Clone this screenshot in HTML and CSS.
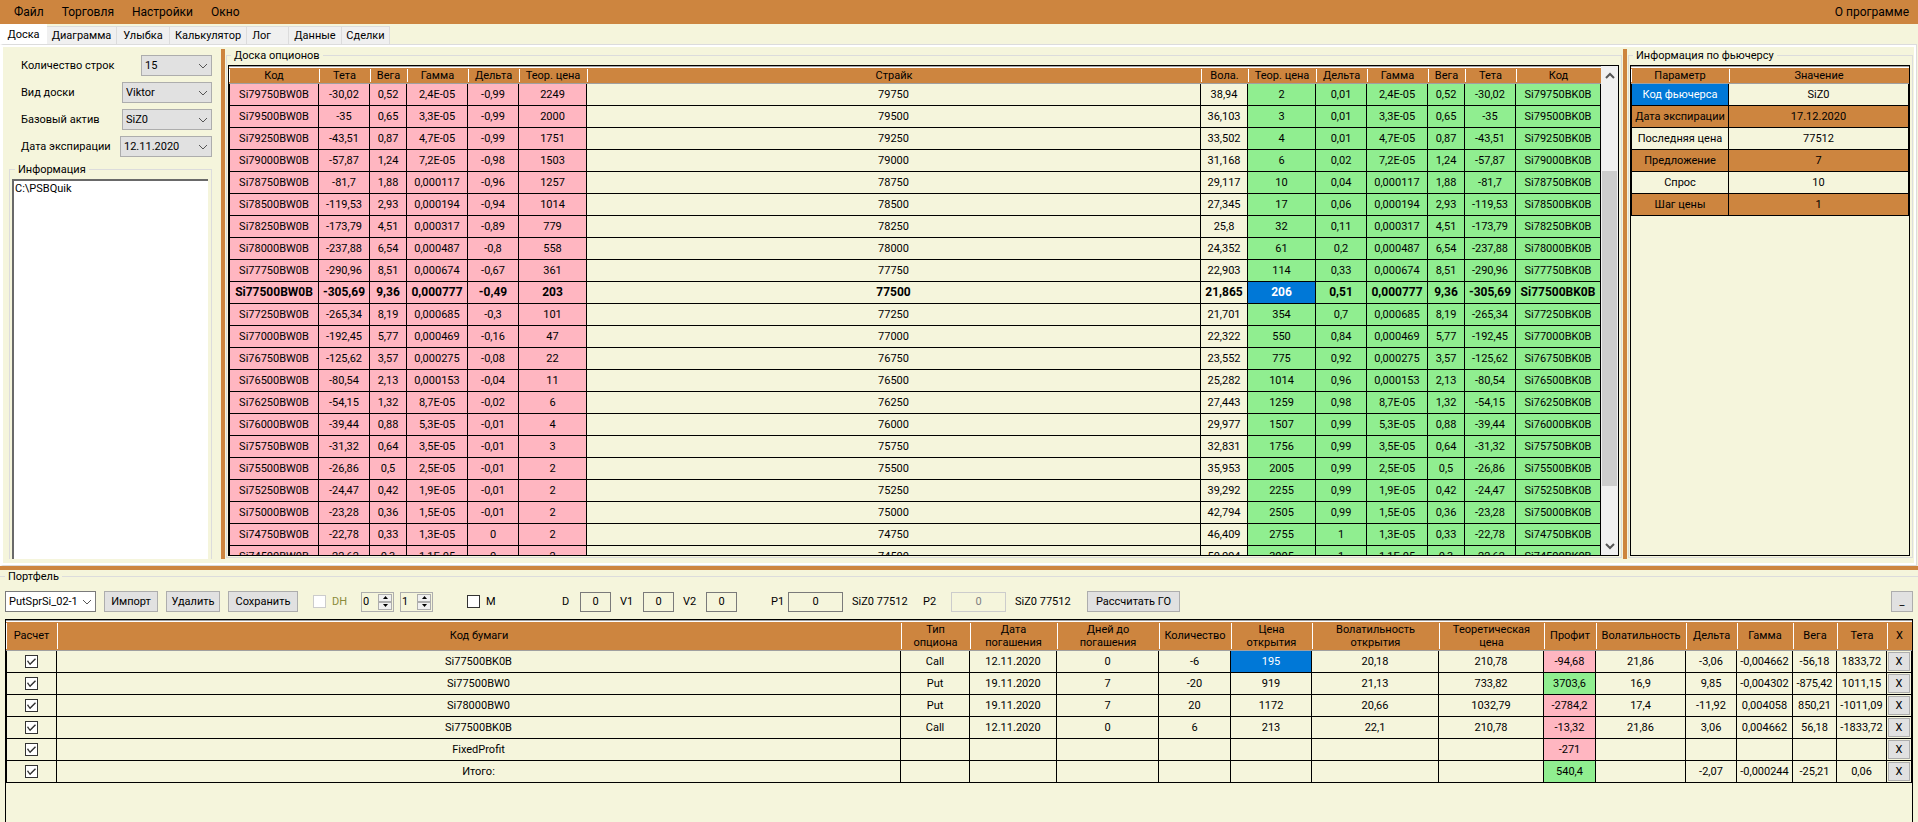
FILE: index.html
```html
<!DOCTYPE html>
<html lang="ru">
<head>
<meta charset="utf-8">
<title>Доска опционов</title>
<link rel="stylesheet" href="styles.css">
</head>
<body>
<nav class="menu">
  <button type="button">Файл</button>
  <button type="button">Торговля</button>
  <button type="button">Настройки</button>
  <button type="button">Окно</button>
  <button type="button" class="menu-about">О программе</button>
</nav>

<div class="tabs" role="tablist">
  <button type="button" role="tab" class="tab tab-active" aria-selected="true">Доска</button>
  <button type="button" role="tab" class="tab tab-l">Диаграмма</button>
  <button type="button" role="tab" class="tab tab-m">Улыбка</button>
  <button type="button" role="tab" class="tab tab-xl">Калькулятор</button>
  <button type="button" role="tab" class="tab tab-s">Лог</button>
  <button type="button" role="tab" class="tab tab-m">Данные</button>
  <button type="button" role="tab" class="tab tab-end">Сделки</button>
</div>

<main class="page">
  <aside class="side">
    <div class="field">
      <label for="rows">Количество строк</label>
      <span class="combo combo-s"><select id="rows"><option>15</option></select><svg viewBox="0 0 10 6"><path d="M1 1l4 4 4-4"/></svg></span>
    </div>
    <div class="field">
      <label for="view">Вид доски</label>
      <span class="combo combo-m"><select id="view"><option>Viktor</option></select><svg viewBox="0 0 10 6"><path d="M1 1l4 4 4-4"/></svg></span>
    </div>
    <div class="field">
      <label for="asset">Базовый актив</label>
      <span class="combo combo-m"><select id="asset"><option>SiZ0</option></select><svg viewBox="0 0 10 6"><path d="M1 1l4 4 4-4"/></svg></span>
    </div>
    <div class="field">
      <label for="expiry">Дата экспирации</label>
      <span class="combo combo-l"><select id="expiry"><option>12.11.2020</option></select><svg viewBox="0 0 10 6"><path d="M1 1l4 4 4-4"/></svg></span>
    </div>
    <fieldset class="group info">
      <legend>Информация</legend>
      <textarea class="log" aria-label="Информация">C:\PSBQuik</textarea>
    </fieldset>
  </aside>

  <div class="splitter"></div>

  <fieldset class="group">
    <legend>Доска опционов</legend>
    <div class="grid board">
      <div class="viewport">
        <table class="sheet">
          <colgroup>
            <col class="w-code"><col class="w-teta"><col class="w-vega"><col class="w-gamma"><col class="w-teta"><col class="w-price">
            <col>
            <col class="w-vola"><col class="w-price"><col class="w-teta"><col class="w-gamma"><col class="w-vega"><col class="w-teta"><col class="w-code2">
          </colgroup>
          <thead>
            <tr><th>Код</th><th>Тета</th><th>Вега</th><th>Гамма</th><th>Дельта</th><th>Теор. цена</th><th>Страйк</th><th>Вола.</th><th>Теор. цена</th><th>Дельта</th><th>Гамма</th><th>Вега</th><th>Тета</th><th>Код</th></tr>
          </thead>
          <tbody id="board-rows"></tbody>
        </table>
      </div>
      <div class="scrollbar">
        <button type="button" aria-label="Вверх"><svg viewBox="0 0 10 7"><path d="M1 6l4-4 4 4"/></svg></button>
        <div class="track"><div class="thumb"></div></div>
        <button type="button" aria-label="Вниз"><svg viewBox="0 0 10 7"><path d="M1 1l4 4 4-4"/></svg></button>
      </div>
    </div>
  </fieldset>

  <div class="splitter"></div>

  <fieldset class="group">
    <legend>Информация по фьючерсу</legend>
    <div class="grid future">
      <table class="sheet">
        <colgroup><col class="w-param"><col></colgroup>
        <thead><tr><th>Параметр</th><th>Значение</th></tr></thead>
        <tbody>
          <tr><td class="selected">Код фьючерса</td><td>SiZ0</td></tr>
          <tr class="alt"><td>Дата экспирации</td><td>17.12.2020</td></tr>
          <tr><td>Последняя цена</td><td>77512</td></tr>
          <tr class="alt"><td>Предложение</td><td>7</td></tr>
          <tr><td>Спрос</td><td>10</td></tr>
          <tr class="alt"><td>Шаг цены</td><td>1</td></tr>
        </tbody>
      </table>
    </div>
  </fieldset>
</main>

<div class="splitter-row"></div>

<fieldset class="portfolio">
  <legend>Портфель</legend>
  <div class="toolbar">
    <div class="files">
      <span class="combo combo-white"><select aria-label="Портфель"><option>PutSprSi_02-1</option></select><svg viewBox="0 0 10 6"><path d="M1 1l4 4 4-4"/></svg></span>
      <button type="button" class="btn btn-s">Импорт</button>
      <button type="button" class="btn btn-s">Удалить</button>
      <button type="button" class="btn btn-m">Сохранить</button>
    </div>
    <div class="hedge">
      <label class="check dim"><input type="checkbox" disabled>DH</label>
      <span class="spin"><input type="text" value="0" aria-label="DH 1"><span class="arrows"><button type="button" aria-label="Больше"><svg viewBox="0 0 5 3"><path d="M0 3h5L2.500 0z"/></svg></button><button type="button" aria-label="Меньше"><svg viewBox="0 0 5 3"><path d="M0 0h5L2.500 3z"/></svg></button></span></span>
      <span class="spin"><input type="text" value="1" aria-label="DH 2"><span class="arrows"><button type="button" aria-label="Больше"><svg viewBox="0 0 5 3"><path d="M0 3h5L2.500 0z"/></svg></button><button type="button" aria-label="Меньше"><svg viewBox="0 0 5 3"><path d="M0 0h5L2.500 3z"/></svg></button></span></span>
    </div>
    <label class="check model"><input type="checkbox">M</label>
    <div class="shifts">
      <label class="named named-s">D<input type="text" value="0"></label>
      <label class="named">V1<input type="text" value="0"></label>
      <label class="named">V2<input type="text" value="0"></label>
    </div>
    <div class="prices">
      <label class="named price">P1<input type="text" value="0"></label>
      <span class="quote">SiZ0 77512</span>
      <label class="named price price2">P2<input type="text" value="0" disabled></label>
      <span class="quote">SiZ0 77512</span>
    </div>
    <button type="button" class="btn btn-l">Рассчитать ГО</button>
    <button type="button" class="btn btn-min">_</button>
  </div>
  <div class="grid positions">
    <table class="sheet">
      <colgroup>
        <col class="p-calc"><col><col class="p-type"><col class="p-date"><col class="p-days"><col class="p-qty"><col class="p-open"><col class="p-volopen"><col class="p-theor"><col class="p-profit"><col class="p-vol"><col class="p-delta"><col class="p-gamma"><col class="p-vega"><col class="p-teta"><col class="p-x">
      </colgroup>
      <thead>
        <tr><th>Расчет</th><th>Код бумаги</th><th>Тип<br>опциона</th><th>Дата<br>погашения</th><th>Дней до<br>погашения</th><th>Количество</th><th>Цена<br>открытия</th><th>Волатильность<br>открытия</th><th>Теоретическая<br>цена</th><th>Профит</th><th>Волатильность</th><th>Дельта</th><th>Гамма</th><th>Вега</th><th>Тета</th><th>X</th></tr>
      </thead>
      <tbody>
        <tr><td><input type="checkbox" checked aria-label="Расчет"></td><td>Si77500BK0B</td><td>Call</td><td>12.11.2020</td><td>0</td><td>-6</td><td class="selected">195</td><td>20,18</td><td>210,78</td><td class="put">-94,68</td><td>21,86</td><td>-3,06</td><td>-0,004662</td><td>-56,18</td><td>1833,72</td><td><button type="button" class="del">X</button></td></tr>
        <tr><td><input type="checkbox" checked aria-label="Расчет"></td><td>Si77500BW0</td><td>Put</td><td>19.11.2020</td><td>7</td><td>-20</td><td>919</td><td>21,13</td><td>733,82</td><td class="call">3703,6</td><td>16,9</td><td>9,85</td><td>-0,004302</td><td>-875,42</td><td>1011,15</td><td><button type="button" class="del">X</button></td></tr>
        <tr><td><input type="checkbox" checked aria-label="Расчет"></td><td>Si78000BW0</td><td>Put</td><td>19.11.2020</td><td>7</td><td>20</td><td>1172</td><td>20,66</td><td>1032,79</td><td class="put">-2784,2</td><td>17,4</td><td>-11,92</td><td>0,004058</td><td>850,21</td><td>-1011,09</td><td><button type="button" class="del">X</button></td></tr>
        <tr><td><input type="checkbox" checked aria-label="Расчет"></td><td>Si77500BK0B</td><td>Call</td><td>12.11.2020</td><td>0</td><td>6</td><td>213</td><td>22,1</td><td>210,78</td><td class="put">-13,32</td><td>21,86</td><td>3,06</td><td>0,004662</td><td>56,18</td><td>-1833,72</td><td><button type="button" class="del">X</button></td></tr>
        <tr><td><input type="checkbox" checked aria-label="Расчет"></td><td>FixedProfit</td><td></td><td></td><td></td><td></td><td></td><td></td><td></td><td class="put">-271</td><td></td><td></td><td></td><td></td><td></td><td><button type="button" class="del">X</button></td></tr>
        <tr><td><input type="checkbox" checked aria-label="Расчет"></td><td>Итого:</td><td></td><td></td><td></td><td></td><td></td><td></td><td></td><td class="call">540,4</td><td></td><td>-2,07</td><td>-0,000244</td><td>-25,21</td><td>0,06</td><td><button type="button" class="del">X</button></td></tr>
      </tbody>
    </table>
  </div>
</fieldset>
<script src="board.js"></script>
</body>
</html>
```

FILE: styles.css
```css
* { box-sizing: border-box; }

html, body { height: 100%; }

body {
  margin: 0;
  display: flex;
  flex-direction: column;
  overflow: hidden;
  background: #f5f5dc;
  color: #000;
  font: 11px/13px Roboto, "Liberation Sans", sans-serif;
}

button, input, select, textarea {
  margin: 0;
  padding: 0;
  border: 0;
  border-radius: 0;
  background: none;
  color: inherit;
  font: inherit;
}

svg { display: block; fill: none; stroke: #555; }

/* menu */
.menu {
  flex: none;
  display: flex;
  align-items: center;
  gap: 18px;
  height: 24px;
  padding: 0 9px 0 14px;
  background: #cd853f;
  font-size: 12px;
}
.menu-about { margin-left: auto; }

/* tabs */
.tabs {
  flex: none;
  display: flex;
  align-items: flex-end;
  height: 20px;
}
.tab {
  height: 18px;
  border: 1px solid #dcdcdc;
  border-width: 1px 1px 0 0;
  background: #f0f0f0;
  text-align: center;
}
.tab-active {
  width: 47px;
  height: 20px;
  border: 0;
  background: #fff;
}
.tab-s { width: 42px; padding-right: 12px; }
.tab-m { width: 53px; }
.tab-l { width: 70px; }
.tab-xl { width: 77px; }
.tab-end { width: 48px; }

/* tab page */
.page {
  flex: 1;
  min-height: 0;
  margin-right: 1px;
  display: grid;
  grid-template-columns: 218px 4px 1fr 4px 287px;
  grid-template-rows: minmax(0, 1fr);
  padding: 4px 2px 6px 0;
  border: 1px solid #dcdcdc;
  border-left: 3px solid #fff;
  outline: 2px solid #fff;
  outline-offset: -3px;
}
.splitter, .splitter-row { background: #cd853f; }
.splitter-row { flex: 0 0 4px; }

.group {
  min-width: 0;
  min-height: 0;
  display: flex;
  flex-direction: column;
  margin: 0 1px 1px;
  padding: 3px 2px 1px 1px;
  border: 1px solid #dcdcdc;
}
.group legend, .portfolio legend { padding: 0 3px; }
.group legend { margin-left: 3px; }

/* left panel */
.side {
  display: flex;
  flex-direction: column;
  gap: 6px;
  min-height: 0;
  overflow: hidden;
  padding: 6px 9px 0 6px;
}
.field {
  flex: none;
  display: flex;
  align-items: center;
  justify-content: space-between;
  padding-left: 12px;
}
.combo { display: grid; height: 21px; align-items: center; }
.combo select, .combo svg { grid-area: 1 / 1; }
.combo select {
  appearance: none;
  width: 100%;
  height: 21px;
  padding-left: 3px;
  border: 1px solid #adadad;
  background: #e1e1e1;
}
.combo svg {
  justify-self: end;
  width: 10px;
  height: 6px;
  margin-right: 4px;
  pointer-events: none;
}
.combo-s { width: 71px; }
.combo-m { width: 90px; }
.combo-l { width: 92px; }
.combo-white { width: 91px; }
.combo-white select { background: #fff; border-color: #7a7a7a; }

.info {
  flex: 1;
  margin: 0;
  padding: 3px 3px 0 2px;
  border-bottom: 0;
}
.log {
  flex: 1;
  resize: none;
  padding: 1px 0 0 1px;
  border: solid #696969;
  border-width: 2px 0 0 2px;
  background: #fff;
}

/* data grids */
.grid {
  flex: 1;
  min-height: 0;
  overflow: hidden;
  border: 1px solid #000;
}
.board { display: flex; }
.viewport { flex: 1; overflow: hidden; }

.sheet {
  width: 100%;
  table-layout: fixed;
  border-collapse: separate;
  border-spacing: 0;
  text-align: center;
}
.sheet th {
  height: 18px;
  padding: 0;
  border: solid #a0a0a0;
  border-width: 1px 0;
  background:
    linear-gradient(#fff, #fff) 0 0 / 100% 1px no-repeat,
    linear-gradient(#fff, #fff) 0 50% / 1px 13px no-repeat,
    #cd853f;
  font-weight: 400;
}
.sheet td {
  height: 22px;
  padding: 0;
  border: solid #000;
  border-width: 0 1px 1px 0;
  white-space: nowrap;
}
.sheet td:first-child { border-left-width: 1px; }
.sheet .put { background: #ffb6c1; }
.sheet .call { background: #90ee90; }
.sheet .alt td { background: #cd853f; }
.sheet td.selected { background: #0078d7; color: #fff; }
.sheet .atm td { font-size: 12px; font-weight: 700; }

.w-code { width: 90px; }
.w-code2 { width: 85px; }
.w-teta { width: 51px; }
.w-vega { width: 37px; }
.w-gamma { width: 61px; }
.w-price { width: 68px; }
.w-vola { width: 47px; }
.w-param { width: 98px; }

.scrollbar {
  display: flex;
  flex-direction: column;
  width: 17px;
  background: #f0f0f0;
}
.scrollbar button {
  flex: 0 0 18px;
  display: grid;
  place-items: center;
}
.scrollbar svg { width: 10px; height: 7px; stroke-width: 2; }
.track { flex: 1; display: flex; flex-direction: column; padding: 87px 1px 0; }
.thumb { flex: 0 0 86%; background: #cdcdcd; }

/* portfolio */
.portfolio {
  flex: 0 0 252px;
  min-width: 0;
  display: flex;
  flex-direction: column;
  margin: 0;
  padding: 7px 5px 0;
  border: 0 solid #dcdcdc;
  border-top-width: 1px;
}
.toolbar {
  flex: none;
  display: flex;
  align-items: center;
  height: 23px;
  margin-bottom: 6px;
}
.files { display: flex; gap: 8px; }
.hedge { display: flex; align-items: center; gap: 6px; margin-left: 15px; }
.btn {
  height: 21px;
  border: 1px solid #adadad;
  background: #e1e1e1;
}
.btn-s { width: 54px; }
.btn-m { width: 70px; }
.btn-l { width: 93px; }
.btn-min { width: 22px; margin-left: auto; }

.check { display: flex; align-items: center; gap: 6px; }
.dim { width: 42px; color: #8b8b3a; }
.model { width: 61px; margin-left: 34px; }

input[type="checkbox"] {
  appearance: none;
  display: inline-block;
  width: 13px;
  height: 13px;
  border: 1px solid #333;
  background: #fff;
  vertical-align: middle;
}
input[type="checkbox"]:disabled { border-color: #ccc; }
input[type="checkbox"]:checked::before {
  content: "";
  display: block;
  width: 11px;
  height: 11px;
  background: #333;
  clip-path: polygon(1px 5px, 2px 4px, 4px 7px, 9px 2px, 10px 3px, 4px 9px);
}

.spin {
  display: flex;
  width: 33px;
  height: 20px;
  padding: 1px;
  border: 1px solid #adadad;
}
.spin input { flex: 1; min-width: 0; }
.arrows { display: flex; flex-direction: column; width: 14px; }
.arrows button {
  flex: 1;
  display: grid;
  place-items: center;
  border: 1px solid #adadad;
  background: #f0f0f0;
}
.arrows svg { width: 5px; height: 3px; fill: #000; stroke: none; }

.shifts { display: flex; gap: 9px; margin-left: 34px; }
.named { display: flex; align-items: center; justify-content: space-between; width: 54px; }
.named-s { width: 49px; }
.named input {
  width: 31px;
  height: 20px;
  border: 1px solid #7a7a7a;
  text-align: center;
}
.prices { display: flex; align-items: center; gap: 9px; margin-left: 34px; }
.price { width: 72px; }
.price input { width: 55px; }
.price input:disabled { border-color: #ccc; color: #808080; }
.price2 { width: 83px; margin-left: 6px; }
.quote { width: 56px; white-space: nowrap; }
.prices + .btn { margin-left: 16px; }

.positions { border-bottom: 0; }
.positions th { height: 31px; background:
    linear-gradient(#fff, #fff) 0 0 / 100% 1px no-repeat,
    linear-gradient(#fff, #fff) 0 50% / 1px 26px no-repeat,
    #cd853f; }
.del {
  width: 22px;
  height: 19px;
  border: 1px solid #adadad;
  background: #e1e1e1;
  display: block;
  margin: 0 auto;
}
.p-calc { width: 51px; }
.p-type { width: 69px; }
.p-date { width: 87px; }
.p-days { width: 102px; }
.p-qty { width: 72px; }
.p-open { width: 81px; }
.p-volopen { width: 127px; }
.p-theor { width: 105px; }
.p-profit { width: 52px; }
.p-vol { width: 90px; }
.p-delta { width: 51px; }
.p-gamma { width: 56px; }
.p-vega { width: 44px; }
.p-teta { width: 50px; }
.p-x { width: 25px; }
```

FILE: board.js
```js
// strike, teta, vega, gamma, put delta, put price, volatility, call price, call delta
const rows = [
  [79750, "-30,02", "0,52", "2,4E-05", "-0,99", 2249, "38,94", 2, "0,01"],
  [79500, "-35", "0,65", "3,3E-05", "-0,99", 2000, "36,103", 3, "0,01"],
  [79250, "-43,51", "0,87", "4,7E-05", "-0,99", 1751, "33,502", 4, "0,01"],
  [79000, "-57,87", "1,24", "7,2E-05", "-0,98", 1503, "31,168", 6, "0,02"],
  [78750, "-81,7", "1,88", "0,000117", "-0,96", 1257, "29,117", 10, "0,04"],
  [78500, "-119,53", "2,93", "0,000194", "-0,94", 1014, "27,345", 17, "0,06"],
  [78250, "-173,79", "4,51", "0,000317", "-0,89", 779, "25,8", 32, "0,11"],
  [78000, "-237,88", "6,54", "0,000487", "-0,8", 558, "24,352", 61, "0,2"],
  [77750, "-290,96", "8,51", "0,000674", "-0,67", 361, "22,903", 114, "0,33"],
  [77500, "-305,69", "9,36", "0,000777", "-0,49", 203, "21,865", 206, "0,51"],
  [77250, "-265,34", "8,19", "0,000685", "-0,3", 101, "21,701", 354, "0,7"],
  [77000, "-192,45", "5,77", "0,000469", "-0,16", 47, "22,322", 550, "0,84"],
  [76750, "-125,62", "3,57", "0,000275", "-0,08", 22, "23,552", 775, "0,92"],
  [76500, "-80,54", "2,13", "0,000153", "-0,04", 11, "25,282", 1014, "0,96"],
  [76250, "-54,15", "1,32", "8,7E-05", "-0,02", 6, "27,443", 1259, "0,98"],
  [76000, "-39,44", "0,88", "5,3E-05", "-0,01", 4, "29,977", 1507, "0,99"],
  [75750, "-31,32", "0,64", "3,5E-05", "-0,01", 3, "32,831", 1756, "0,99"],
  [75500, "-26,86", "0,5", "2,5E-05", "-0,01", 2, "35,953", 2005, "0,99"],
  [75250, "-24,47", "0,42", "1,9E-05", "-0,01", 2, "39,292", 2255, "0,99"],
  [75000, "-23,28", "0,36", "1,5E-05", "-0,01", 2, "42,794", 2505, "0,99"],
  [74750, "-22,78", "0,33", "1,3E-05", "0", 2, "46,409", 2755, "1"],
  [74500, "-22,62", "0,3", "1,1E-05", "0", 2, "50,094", 3005, "1"]
];
const MONEY = 77500;

const cell = (text, kind) => `<td class="${kind}">${text}</td>`;

document.getElementById("board-rows").innerHTML = rows.map(r => {
  const [strike, teta, vega, gamma, putDelta, putPrice, vola, callPrice, callDelta] = r;
  const atm = strike === MONEY;
  const put = [`Si${strike}BW0B`, teta, vega, gamma, putDelta, putPrice].map(v => cell(v, "put"));
  const call = [callDelta, gamma, vega, teta, `Si${strike}BK0B`].map(v => cell(v, "call"));
  return `<tr class="${atm ? "atm" : ""}">${put.join("")}${cell(strike, "mid")}${cell(vola, "mid")}` +
    `${cell(callPrice, atm ? "selected" : "call")}${call.join("")}</tr>`;
}).join("");
```
